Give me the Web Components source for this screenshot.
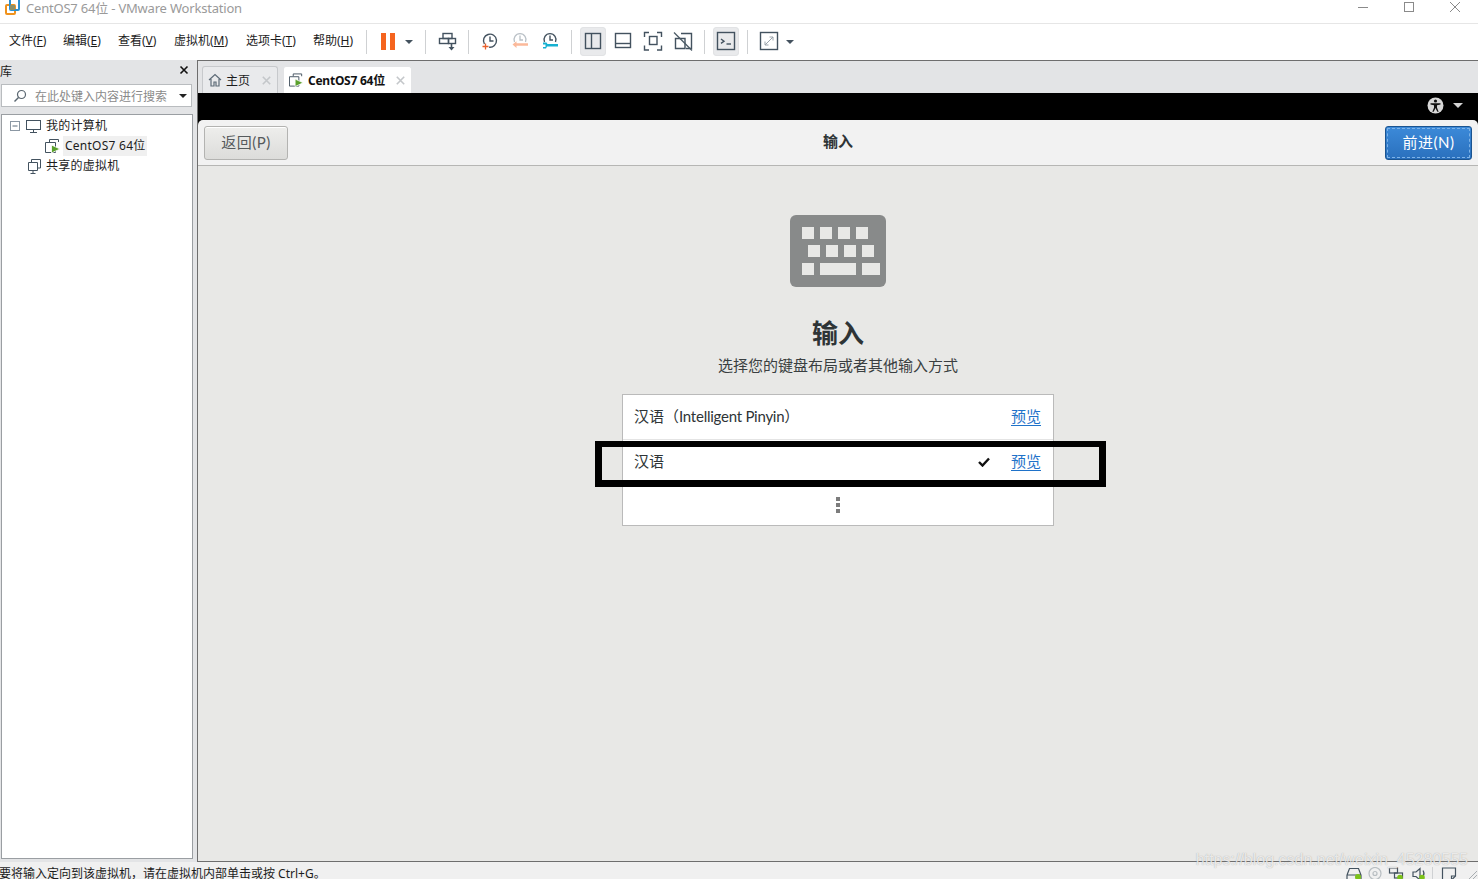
<!DOCTYPE html>
<html lang="zh"><head><meta charset="utf-8"><title>CentOS7 64位 - VMware Workstation</title>
<style>
html,body{margin:0;padding:0;background:#fff;overflow:hidden}
body{font-family:"Noto Sans","Noto Sans CJK SC",sans-serif}
</style></head><body>
<vm-app></vm-app>
<script>
const FONT='"Noto Sans","Noto Sans CJK SC",sans-serif';
const GTK='"Lato","Noto Sans CJK SC",sans-serif';
function def(name,html){
  customElements.define(name,class extends HTMLElement{
    constructor(){super();this.attachShadow({mode:'open'}).innerHTML=html;}
  });
}
const S='fill="none" stroke="#43525f" stroke-width="1.4"';
const icon=(w,h,body)=>`<svg width="${w}" height="${h}" viewBox="0 0 ${w} ${h}" style="display:block">${body}</svg>`;
const VM='<path d="M4.500 3V.5h9V3M.5 3.500h10V13.500H.5z" fill="none" stroke="#43525f"/><path d="M6.500 6v8l8.500-4z" fill="#5aa02c" stroke="#fff" stroke-width=".8"/>';

def('tb-button',`<style>
:host{display:flex;flex:none;width:30px;height:29px;box-sizing:border-box;align-items:center;justify-content:center}
:host([w="26"]){width:26px;margin:0 2px}
:host([on]){background:#e9eaec;border-radius:4px;box-shadow:inset 0 0 0 1px #e2e3e5}
:host([arrow]){width:12px}
</style><slot></slot>`);
def('tb-sep',`<style>:host{display:block;flex:none;width:1px;height:24px;margin:0 6px;background:#cfd1d3}</style>`);
def('drop-arrow',`<style>:host{display:block;width:0;height:0;border-left:4px solid transparent;border-right:4px solid transparent;border-top:4px solid var(--c,#44525e)}</style>`);
def('menu-item',`<style>:host{display:block;flex:none;font-size:12px;color:#1c1c1c;white-space:nowrap}</style><slot></slot>`);

def('vm-titlebar',`<style>
:host{display:flex;flex:none;height:24px;box-sizing:border-box;border-bottom:1px solid #e6e6e6;background:#fff;overflow:hidden}
.t{font-size:13px;line-height:16px;color:#9a9a9a;margin-left:6px;white-space:nowrap;letter-spacing:-.2px}
.logo{margin-left:5px;flex:none}
.ctl{margin-left:auto;display:flex;flex:none}
.ctl div{width:46px;height:23px;display:flex;justify-content:center}
</style>
<svg class="logo" width="15" height="15" viewBox="0 0 15 15"><rect x="1" y="5" width="9" height="9" rx="1" fill="none" stroke="#f0921c" stroke-width="2"/><rect x="5" y="-1" width="9" height="11" rx="1" fill="none" stroke="#2a8fd0" stroke-width="2"/><rect x="5" y="5" width="5" height="5" fill="#8a8f6a"/></svg>
<span class="t">CentOS7 64位 - VMware Workstation</span>
<div class="ctl">
<div>${icon(12,14,'<line x1="1" y1="7.5" x2="11" y2="7.5" stroke="#8a8a8a"/>')}</div>
<div>${icon(12,14,'<rect x="1.5" y="2.5" width="9" height="9" fill="none" stroke="#8a8a8a"/>')}</div>
<div>${icon(12,14,'<path d="M1 2L11 12M11 2L1 12" stroke="#8a8a8a" fill="none"/>')}</div>
</div>`);

def('vm-toolbar',`<style>
:host{display:flex;flex:none;height:36px;align-items:center;background:#fff;box-sizing:border-box;padding-left:9px;padding-bottom:1px}
.menu{display:flex;width:351px;flex:none;margin-top:-3px}
u{text-decoration:underline;text-underline-offset:1px}
.pause{display:flex;gap:4px}.pause i{display:block;width:5px;height:17px;background:#f5641e}
</style>
<div class="menu">
<menu-item style="width:54px">文件(<u>F</u>)</menu-item><menu-item style="width:55px">编辑(<u>E</u>)</menu-item><menu-item style="width:56px">查看(<u>V</u>)</menu-item><menu-item style="width:72px">虚拟机(<u>M</u>)</menu-item><menu-item style="width:67px">选项卡(<u>T</u>)</menu-item><menu-item>帮助(<u>H</u>)</menu-item>
</div>
<tb-sep></tb-sep>
<tb-button><div class="pause"><i></i><i></i></div></tb-button>
<tb-button arrow style="margin-right:4px"><drop-arrow></drop-arrow></tb-button>
<tb-sep></tb-sep>
<tb-button>${icon(30,29,`<g ${S}><rect x="11" y="6.5" width="9" height="5"/><rect x="7.5" y="11.5" width="9" height="5"/><rect x="16.5" y="11.5" width="7" height="5"/></g><path d="M19.5 16.5V21" stroke="#43525f" stroke-width="1.6"/><path d="M16.5 20h6l-3 3.5z" fill="#43525f"/>`)}</tb-button>
<tb-sep></tb-sep>
<tb-button>${icon(30,29,`<path d="M9.400 17A6.500 6.500 0 1 1 14 20.100" ${S}/><path d="M15 9.500V14h3.500" ${S}/><path d="M7.500 19.500h6M10.500 16.500v6" stroke="#e8602c" stroke-width="1.300"/>`)}</tb-button>
<tb-button>${icon(30,29,`<path d="M9.500 15a6 6 0 1 1 11 0" fill="none" stroke="#b9c0c6" stroke-width="1.300"/><path d="M15 8.500V13h3" fill="none" stroke="#b9c0c6" stroke-width="1.300"/><path d="M11.500 16.200h11.500v2.600H11.500v2.200L7.500 17.500l4-3.300z" fill="#fbb99a"/>`)}</tb-button>
<tb-button>${icon(30,29,`<path d="M9.500 15a6 6 0 1 1 11 0" ${S}/><path d="M15 8.500V13h3" ${S}/><path d="M8 15.500h3.500l1 1.500h10.500v2.500H12l-1 2H8v-1.500h2.500v-2.500H8z" fill="#17b1d1"/>`)}</tb-button>
<tb-sep></tb-sep>
<tb-button w="26" on>${icon(26,29,`<g ${S}><rect x="5.500" y="6.500" width="15" height="15"/><path d="M11.500 6.500v15"/></g>`)}</tb-button>
<tb-button>${icon(30,29,`<g ${S}><rect x="7.500" y="6.500" width="15" height="14"/><path d="M7.500 16.500h15"/></g>`)}</tb-button>
<tb-button>${icon(30,29,`<g ${S}><rect x="11.500" y="9.500" width="7.500" height="8"/><path d="M6.500 10V5.500H11M19 5.500h4.500V10M23.500 18.500V23H19M11 23H6.500V18.500"/></g>`)}</tb-button>
<tb-button>${icon(30,29,`<g ${S}><path d="M13 6.500h10.500v15H18M7.500 11.500H17V21.500H7.500z"/></g><path d="M6 5.500L24 23.500" stroke="#4a5964" stroke-width="1.200"/>`)}</tb-button>
<tb-sep></tb-sep>
<tb-button w="26" on>${icon(26,29,`<rect x="4.500" y="5.500" width="17" height="17" ${S}/><path d="M8 12l3 2.200-3 2.200" ${S}/><path d="M13.500 17h4.500" ${S}/>`)}</tb-button>
<tb-sep></tb-sep>
<tb-button>${icon(30,29,`<rect x="6.500" y="5.500" width="17" height="17" ${S}/><path d="M11 18l8-8M15.500 10H19v3.500M11 14.500V18h3.500" fill="none" stroke="#9aa3ab" stroke-width="1"/>`)}</tb-button>
<tb-button arrow><drop-arrow></drop-arrow></tb-button>`);

def('tree-row',`<style>
:host{display:flex;height:20px;align-items:center;font-size:12px;color:#1c1c1c;white-space:nowrap}
.lead{flex:none;display:flex;align-items:center}
.lb{padding:0 1px 0 2px;height:20px;line-height:20px;letter-spacing:.25px}
:host([sel]) .lb{background:#f0f0f0}
</style><span class="lead"><slot name="lead"></slot></span><span class="lb"><slot></slot></span>`);

def('vm-sidebar',`<style>
:host{display:flex;flex-direction:column;flex:none;width:197px;box-sizing:border-box;background:#e3e4e6;padding:0 4px 3px 1px}
.hd{flex:none;height:23px;display:flex;align-items:center;justify-content:space-between;font-size:12px;color:#1c1c1c;margin:-1px 0 0 0;padding:0 3px 0 0}
.hd span{margin-left:-1px}
.search{flex:none;height:23px;box-sizing:border-box;border:1px solid #b9bcbf;background:#fff;display:flex;align-items:center;font-size:12px;color:#8a8a8a;padding-left:10px;width:191px;margin-top:2px}
.search span{margin-left:7px;white-space:nowrap}
.search drop-arrow{margin-left:auto;margin-right:4px;--c:#222}
.tree{flex:1;margin-top:7px;border:1px solid #9a9ea2;background:#fff;padding-top:1px;box-sizing:border-box;min-height:0}
</style>
<div class="hd"><span>库</span>${icon(11,11,'<path d="M1.500 1.500l7 7M8.500 1.500l-7 7" stroke="#111" stroke-width="1.600"/>')}</div>
<div class="search">${icon(16,16,'<circle cx="9.500" cy="6.500" r="4" fill="none" stroke="#5a6670" stroke-width="1.200"/><path d="M6.500 9.500L2.500 13.500" stroke="#5a6670" stroke-width="1.400"/>')}<span>在此处键入内容进行搜索</span><drop-arrow></drop-arrow></div>
<div class="tree">
<tree-row><span slot="lead" style="display:flex;align-items:center;padding-left:8px">${icon(10,10,'<rect x=".5" y=".5" width="9" height="9" fill="#fff" stroke="#8b97a3"/><path d="M2.500 5h5" stroke="#5a6b7a"/>')}<svg width="15" height="13" viewBox="0 0 15 13" style="margin:0 3px 0 6px;display:block"><rect x=".5" y=".5" width="14" height="9" fill="none" stroke="#43525f"/><path d="M7.500 9.500V12M4 12.500h7" stroke="#43525f"/></svg></span>我的计算机</tree-row>
<tree-row sel><span slot="lead" style="display:flex;padding-left:43px;margin-right:2px">${icon(16,14,VM)}</span>CentOS7 64位</tree-row>
<tree-row><span slot="lead" style="display:flex;padding-left:26px;width:16px">${icon(13,15,'<path d="M3.500 3V.5h9v8.500H10M.5 3.500h9v8H.5z" fill="none" stroke="#43525f"/><path d="M5 11.500v3M2.500 14.500h5" stroke="#43525f"/>')}</span>共享的虚拟机</tree-row>
</div>`);

def('vm-tab',`<style>
:host{display:flex;align-items:center;flex:none;box-sizing:border-box;height:27px;border:1px solid #c7c9cc;border-bottom:none;border-radius:3px 3px 0 0;background:#e9eaec;font-size:12px;color:#1c1c1c;padding:0 6px 0 5px;white-space:nowrap;gap:4px}
:host([active]){background:#fff;font-weight:700;color:#111;border-color:#e3e4e6;letter-spacing:-.25px}
.x{margin-left:auto;flex:none}
</style><slot name="ic"></slot><slot></slot>
<svg class="x" width="9" height="9" viewBox="0 0 9 9"><path d="M.8.800l7.400 7.400M8.200.800L.8 8.200" stroke="#c4c7ca" stroke-width="1.600"/></svg>`);

def('lang-row',`<style>
:host{display:flex;align-items:center;height:45px;padding:0 12px 3px 11px;font-size:15px;color:#2e3436;box-sizing:border-box;border-bottom:1px solid #e4e4e4}
:host([last]){border-bottom:none;height:40px;padding:0}
:host([last]) .name{display:flex;justify-content:center}
.name{flex:1;white-space:nowrap}
</style><span class="name"><slot></slot></span><slot name="mark"></slot><slot name="link"></slot>`);

def('install-page',`<style>
:host{display:flex;flex-direction:column;align-items:center;flex:1;background:#e8e8e6;min-height:0;color:#2e3436;padding-top:49px;box-sizing:border-box;position:relative}
h1{margin:29px 0 0;font-size:26px;line-height:34px;font-weight:700;color:#2e3436}
p{margin:4px 0 0;font-size:15px;line-height:22px;color:#3a3f41}
.list{margin-top:18px;width:432px;box-sizing:border-box;border:1px solid #bababa;background:#fff}
.dots{display:flex;flex-direction:column;gap:2px}.dots i{display:block;width:4px;height:4px;background:#7c7c7c}
.mark{position:absolute;left:397px;top:275px;width:511px;height:46px;box-sizing:border-box;border:solid #000;border-width:6px 7px 7px 7px}
a{color:#1f72c9;text-decoration:underline;text-underline-offset:3px;font-size:15px}
.lat{letter-spacing:-.25px}
</style>
<svg width="96" height="72" viewBox="0 0 96 72" style="display:block;flex:none"><rect width="96" height="72" rx="6" fill="#888a8a"/><g fill="#e8e8e6"><rect x="12" y="12" width="12" height="12"/><rect x="30" y="12" width="12" height="12"/><rect x="48" y="12" width="12" height="12"/><rect x="66" y="12" width="12" height="12"/><rect x="18" y="30" width="12" height="12"/><rect x="36" y="30" width="12" height="12"/><rect x="54" y="30" width="12" height="12"/><rect x="72" y="30" width="12" height="12"/><rect x="12" y="48" width="12" height="12"/><rect x="30" y="48" width="36" height="12"/><rect x="72" y="48" width="18" height="12"/></g></svg>
<h1>输入</h1>
<p>选择您的键盘布局或者其他输入方式</p>
<div class="list">
<lang-row>汉语（<span class="lat">Intelligent Pinyin</span>）<a slot="link" href="#">预览</a></lang-row>
<lang-row>汉语<svg slot="mark" width="12" height="10" viewBox="0 0 12 10" style="margin:3px 21px 0 0;display:block"><path d="M1 5l3.500 3.500L11 1.500" fill="none" stroke="#111" stroke-width="2.400"/></svg><a slot="link" href="#">预览</a></lang-row>
<lang-row last><div class="dots"><i></i><i></i><i></i></div></lang-row>
</div>
<div class="mark"></div>`);

def('gtk-button',`<style>
:host{display:flex;align-items:center;justify-content:center;flex:none;height:34px;box-sizing:border-box;padding-bottom:3px;border:1px solid #b3b3b1;border-radius:3px;background:linear-gradient(#eeeeec,#dcdcda);font-size:15px;color:#555a5c;box-shadow:inset 0 1px 0 #fff;letter-spacing:.5px}
:host([primary]){color:#fff;background:linear-gradient(#3c8ad9,#2a70bd);border-color:#1b5490;box-shadow:none;outline:1px dashed #7db3e8;outline-offset:-3px}
</style><slot></slot>`);

def('vm-console',`<style>
:host{display:flex;flex-direction:column;flex:1;min-height:0;background:#000;padding-top:27px;position:relative;font-family:${GTK}}
.hdr{flex:none;height:46px;box-sizing:border-box;background:#f2f2f2;border-bottom:1px solid #b6b6b4;border-radius:5px 5px 0 0;display:flex;align-items:center;justify-content:space-between;padding:1px 6px 0 6px;position:relative}
.ttl{position:absolute;left:0;right:0;text-align:center;font-size:15px;font-weight:700;color:#2e3436;line-height:42px;top:0}
.a11y{position:absolute;top:4px;left:1229px;display:flex;align-items:center;gap:9px;--c:#d4d4d4}
.a11y drop-arrow{border-left-width:5px;border-right-width:5px;border-top-width:5px}
</style>
<div class="a11y"><svg width="17" height="17" viewBox="0 0 17 17" style="display:block"><circle cx="8.500" cy="8.500" r="8" fill="#d8d8d8"/><circle cx="8.500" cy="4" r="1.600" fill="#111"/><path d="M3.500 6.300h10v1.300l-3.500.6v2.500l1.700 4h-1.400l-1.800-3.600-1.800 3.600H5.300l1.700-4V8.200l-3.500-.6z" fill="#111"/></svg><drop-arrow></drop-arrow></div>
<div class="hdr"><gtk-button style="width:84px">返回(P)</gtk-button><div class="ttl">输入</div><gtk-button primary style="width:87px">前进(N)</gtk-button></div>
<install-page></install-page>`);

def('vm-main',`<style>
:host{display:flex;flex:1;min-height:0;background:#e3e4e6}
.right{flex:1;min-width:0;display:flex;flex-direction:column;border-left:1px solid #6e6e6e;border-top:1px solid #6e6e6e;border-bottom:1px solid #6e6e6e}
.tabs{flex:none;height:32px;box-sizing:border-box;padding:5px 0 0 4px;display:flex;align-items:flex-end;gap:5px;background:#e3e4e6}
</style>
<vm-sidebar></vm-sidebar>
<div class="right">
<div class="tabs">
<vm-tab style="width:76px"><svg slot="ic" width="14" height="14" viewBox="0 0 14 14" style="display:block"><path d="M1 7l6-5.500L13 7M3 6v7h3V9h2v4h3V6" fill="none" stroke="#5d6b77" stroke-width="1.200"/></svg>主页</vm-tab>
<vm-tab active style="width:129px"><svg slot="ic" width="15" height="14" viewBox="0 0 16 14" style="display:block">${VM}</svg>CentOS7 64位</vm-tab>
</div>
<vm-console></vm-console>
</div>`);

def('vm-statusbar',`<style>
:host{display:flex;flex:none;height:17px;background:#f0f0f0;overflow:hidden;font-size:12px;line-height:24px;color:#1c1c1c;white-space:nowrap}
.m{margin-left:-1px;flex:none}
.ic{margin-left:auto;flex:none;display:flex;align-items:flex-start;padding-top:5px}
</style>
<span class="m">要将输入定向到该虚拟机，请在虚拟机内部单击或按 Ctrl+G。</span>
<div class="ic"><svg width="132" height="13" viewBox="0 0 132 13" style="display:block">
<g fill="none" stroke="#43525f" stroke-width="1.200"><path d="M1 8l2.500-6.500h9L15 8v5M1 8v5M1 8h14"/><circle cx="29" cy="6.500" r="6" stroke="#b8bec2"/><circle cx="29" cy="6.500" r="2" stroke="#b8bec2"/><rect x="43.500" y="1" width="8" height="5"/><rect x="48.500" y="6" width="8" height="5"/><path d="M67 5h3l4-3.500V13L70 9.500h-3z"/><path d="M77 3.500q2 3 0 6"/><path d="M96.500 1h13v8l-4 4h-9z"/><path d="M105.500 13V9h4"/></g>
<path d="M86.500 0v13" stroke="#cfd1d3"/>
<circle cx="12" cy="10" r="3" fill="#7cc21a"/><circle cx="54" cy="10.500" r="2.800" fill="#7cc21a"/><circle cx="76" cy="10.500" r="2.800" fill="#7cc21a"/>
<path d="M122 13l9-9M126 13l5-5" stroke="#a8adb1"/></svg></div>`);

def('vm-app',`<style>
:host{display:flex;flex-direction:column;width:1478px;height:879px;overflow:hidden;font-family:${FONT};background:#fff;position:relative}
.wm{position:absolute;right:10px;bottom:8px;font:16px/22px "Liberation Sans",sans-serif;color:rgba(255,255,255,.75);text-shadow:0 0 1px rgba(110,110,110,.6);white-space:nowrap}
</style>
<vm-titlebar></vm-titlebar><vm-toolbar></vm-toolbar><vm-main></vm-main><vm-statusbar></vm-statusbar>
<span class="wm">https://blog.csdn.net/weixin_45280555</span>`);
</script>
</body></html>
